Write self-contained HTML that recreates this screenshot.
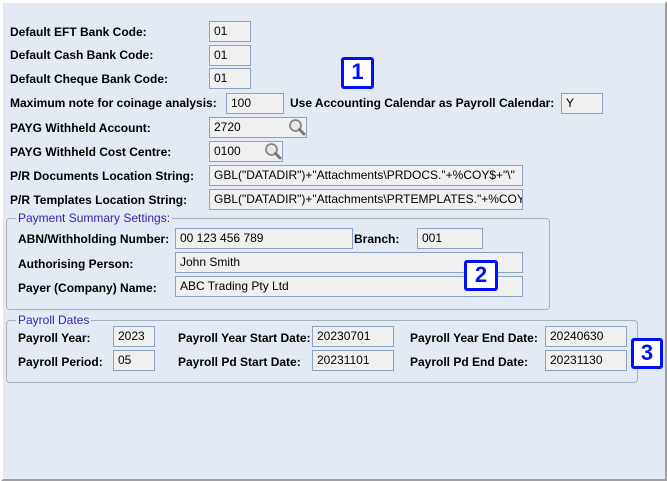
<!DOCTYPE html>
<html><head><style>
body{margin:0;width:667px;height:481px;background:#fff;position:relative;overflow:hidden;font-family:"Liberation Sans",Arial,sans-serif;}
#f{position:absolute;left:1px;top:1px;width:662px;height:476px;background:#e3eaf3;border-top:2px solid #fff;border-left:2px solid #fff;border-right:2px solid #a0a0a0;border-bottom:2px solid #a0a0a0;}
.l{position:absolute;font-size:12px;font-weight:bold;color:#000;line-height:14px;white-space:nowrap;}
.i{position:absolute;box-sizing:border-box;height:21px;background:#f0f0f0;border:1px solid #8aa2c0;font-size:12px;line-height:19px;padding-left:4px;white-space:nowrap;overflow:hidden;color:#000;}
.g{position:absolute;border:1px solid #a8b0bc;border-radius:4px;}
.lg{position:absolute;font-size:12px;color:#2a2ab0;background:#e3eaf3;padding:0 2px;line-height:14px;}
.b{position:absolute;box-sizing:border-box;border:3px solid #0010ff;border-radius:3px;background:#fff;color:#0010ff;font-weight:bold;font-size:22px;line-height:24px;text-align:center;}
.s{position:absolute;width:18px;height:18px;}
</style></head><body><div id="f"></div>
<div class="l" style="left:10px;top:25px">Default EFT Bank Code:</div><div class="i" style="left:209px;top:21px;width:42px">01</div>
<div class="l" style="left:10px;top:48px">Default Cash Bank Code:</div><div class="i" style="left:209px;top:45px;width:42px">01</div>
<div class="l" style="left:10px;top:72px">Default Cheque Bank Code:</div><div class="i" style="left:209px;top:68px;width:42px">01</div>
<div class="l" style="left:10px;top:96px">Maximum note for coinage analysis:</div><div class="i" style="left:226px;top:93px;width:58px">100</div>
<div class="l" style="left:290px;top:96px">Use Accounting Calendar as Payroll Calendar:</div><div class="i" style="left:561px;top:93px;width:42px">Y</div>
<div class="l" style="left:10px;top:121px">PAYG Withheld Account:</div><div class="i" style="left:209px;top:117px;width:98px">2720</div>
<svg class="s" style="left:288px;top:118px" viewBox="0 0 18 18"><circle cx="7.5" cy="7.5" r="5.5" fill="#e8e8e8" stroke="#888" stroke-width="1.8"/><line x1="11.5" y1="11.5" x2="16" y2="16" stroke="#777" stroke-width="3" stroke-linecap="round"/></svg>
<div class="l" style="left:10px;top:145px">PAYG Withheld Cost Centre:</div><div class="i" style="left:209px;top:141px;width:74px">0100</div>
<svg class="s" style="left:264px;top:142px" viewBox="0 0 18 18"><circle cx="7.5" cy="7.5" r="5.5" fill="#e8e8e8" stroke="#888" stroke-width="1.8"/><line x1="11.5" y1="11.5" x2="16" y2="16" stroke="#777" stroke-width="3" stroke-linecap="round"/></svg>
<div class="l" style="left:10px;top:169px">P/R Documents Location String:</div><div class="i" style="left:209px;top:165px;width:314px">GBL("DATADIR")+"Attachments\PRDOCS."+%COY$+"\"</div>
<div class="l" style="left:10px;top:193px">P/R Templates Location String:</div><div class="i" style="left:209px;top:189px;width:314px">GBL("DATADIR")+"Attachments\PRTEMPLATES."+%COY</div>
<div class="b" style="left:341px;top:57px;width:33px;height:32px">1</div>
<div class="g" style="left:6px;top:218px;width:542px;height:90px"></div>
<div class="lg" style="left:16px;top:211px">Payment Summary Settings:</div>
<div class="l" style="left:18px;top:232px">ABN/Withholding Number:</div><div class="i" style="left:175px;top:228px;width:178px">00 123 456 789</div>
<div class="l" style="left:354px;top:232px">Branch:</div><div class="i" style="left:417px;top:228px;width:66px">001</div>
<div class="l" style="left:18px;top:257px">Authorising Person:</div><div class="i" style="left:175px;top:252px;width:348px">John Smith</div>
<div class="l" style="left:18px;top:281px">Payer (Company) Name:</div><div class="i" style="left:175px;top:276px;width:348px">ABC Trading Pty Ltd</div>
<div class="b" style="left:464px;top:260px;width:34px;height:31px">2</div>
<div class="g" style="left:6px;top:320px;width:630px;height:61px"></div>
<div class="lg" style="left:16px;top:313px">Payroll Dates</div>
<div class="l" style="left:18px;top:331px">Payroll Year:</div><div class="i" style="left:113px;top:326px;width:42px">2023</div>
<div class="l" style="left:178px;top:331px">Payroll Year Start Date:</div><div class="i" style="left:312px;top:326px;width:82px">20230701</div>
<div class="l" style="left:410px;top:331px">Payroll Year End Date:</div><div class="i" style="left:545px;top:326px;width:82px">20240630</div>
<div class="l" style="left:18px;top:355px">Payroll Period:</div><div class="i" style="left:113px;top:350px;width:42px">05</div>
<div class="l" style="left:178px;top:355px">Payroll Pd Start Date:</div><div class="i" style="left:312px;top:350px;width:82px">20231101</div>
<div class="l" style="left:410px;top:355px">Payroll Pd End Date:</div><div class="i" style="left:545px;top:350px;width:82px">20231130</div>
<div class="b" style="left:631px;top:338px;width:32px;height:31px">3</div>
</body></html>
